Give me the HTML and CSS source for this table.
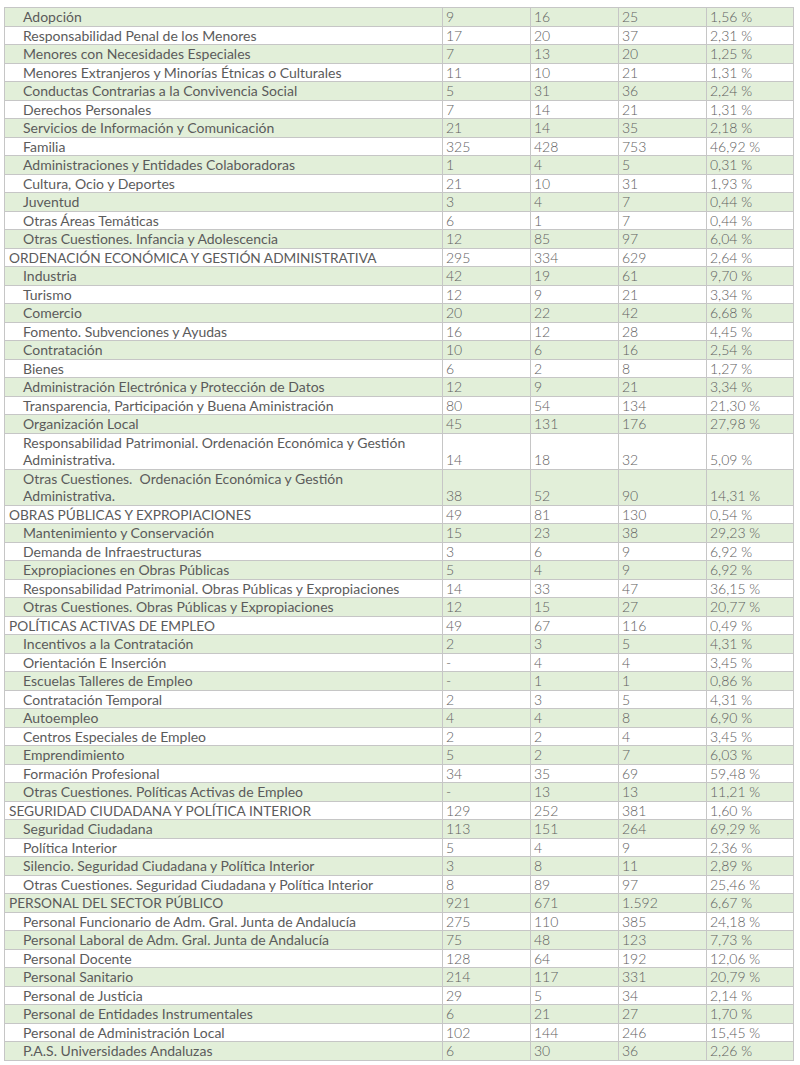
FILE: index.html
```html
<!DOCTYPE html>
<html lang="es">
<head>
<meta charset="utf-8">
<title>Tabla</title>
<link rel="stylesheet" href="styles.css">
</head>
<body>
<table class="data">
<colgroup><col class="c-label"><col class="c-num"><col class="c-num"><col class="c-num"><col class="c-pct"></colgroup>
<tbody>
<tr><td class="lbl">Adopción</td><td>9</td><td>16</td><td>25</td><td>1,56 %</td></tr>
<tr><td class="lbl">Responsabilidad Penal de los Menores</td><td>17</td><td>20</td><td>37</td><td>2,31 %</td></tr>
<tr><td class="lbl">Menores con Necesidades Especiales</td><td>7</td><td>13</td><td>20</td><td>1,25 %</td></tr>
<tr><td class="lbl">Menores Extranjeros y Minorías Étnicas o Culturales</td><td>11</td><td>10</td><td>21</td><td>1,31 %</td></tr>
<tr><td class="lbl">Conductas Contrarias a la Convivencia Social</td><td>5</td><td>31</td><td>36</td><td>2,24 %</td></tr>
<tr><td class="lbl">Derechos Personales</td><td>7</td><td>14</td><td>21</td><td>1,31 %</td></tr>
<tr><td class="lbl">Servicios de Información y Comunicación</td><td>21</td><td>14</td><td>35</td><td>2,18 %</td></tr>
<tr><td class="lbl">Familia</td><td>325</td><td>428</td><td>753</td><td>46,92 %</td></tr>
<tr><td class="lbl">Administraciones y Entidades Colaboradoras</td><td>1</td><td>4</td><td>5</td><td>0,31 %</td></tr>
<tr><td class="lbl">Cultura, Ocio y Deportes</td><td>21</td><td>10</td><td>31</td><td>1,93 %</td></tr>
<tr><td class="lbl">Juventud</td><td>3</td><td>4</td><td>7</td><td>0,44 %</td></tr>
<tr><td class="lbl">Otras Áreas Temáticas</td><td>6</td><td>1</td><td>7</td><td>0,44 %</td></tr>
<tr><td class="lbl">Otras Cuestiones. Infancia y Adolescencia</td><td>12</td><td>85</td><td>97</td><td>6,04 %</td></tr>
<tr><td class="cat">ORDENACIÓN ECONÓMICA Y GESTIÓN ADMINISTRATIVA</td><td>295</td><td>334</td><td>629</td><td>2,64 %</td></tr>
<tr><td class="lbl">Industria</td><td>42</td><td>19</td><td>61</td><td>9,70 %</td></tr>
<tr><td class="lbl">Turismo</td><td>12</td><td>9</td><td>21</td><td>3,34 %</td></tr>
<tr><td class="lbl">Comercio</td><td>20</td><td>22</td><td>42</td><td>6,68 %</td></tr>
<tr><td class="lbl">Fomento. Subvenciones y Ayudas</td><td>16</td><td>12</td><td>28</td><td>4,45 %</td></tr>
<tr><td class="lbl">Contratación</td><td>10</td><td>6</td><td>16</td><td>2,54 %</td></tr>
<tr><td class="lbl">Bienes</td><td>6</td><td>2</td><td>8</td><td>1,27 %</td></tr>
<tr><td class="lbl">Administración Electrónica y Protección de Datos</td><td>12</td><td>9</td><td>21</td><td>3,34 %</td></tr>
<tr><td class="lbl">Transparencia, Participación y Buena Aministración</td><td>80</td><td>54</td><td>134</td><td>21,30 %</td></tr>
<tr><td class="lbl">Organización Local</td><td>45</td><td>131</td><td>176</td><td>27,98 %</td></tr>
<tr><td class="lbl">Responsabilidad Patrimonial. Ordenación Económica y Gestión<br>Administrativa.</td><td>14</td><td>18</td><td>32</td><td>5,09 %</td></tr>
<tr><td class="lbl">Otras Cuestiones.&nbsp; Ordenación Económica y Gestión<br>Administrativa.</td><td>38</td><td>52</td><td>90</td><td>14,31 %</td></tr>
<tr><td class="cat">OBRAS PÚBLICAS Y EXPROPIACIONES</td><td>49</td><td>81</td><td>130</td><td>0,54 %</td></tr>
<tr><td class="lbl">Mantenimiento y Conservación</td><td>15</td><td>23</td><td>38</td><td>29,23 %</td></tr>
<tr><td class="lbl">Demanda de Infraestructuras</td><td>3</td><td>6</td><td>9</td><td>6,92 %</td></tr>
<tr><td class="lbl">Expropiaciones en Obras Públicas</td><td>5</td><td>4</td><td>9</td><td>6,92 %</td></tr>
<tr><td class="lbl">Responsabilidad Patrimonial. Obras Públicas y Expropiaciones</td><td>14</td><td>33</td><td>47</td><td>36,15 %</td></tr>
<tr><td class="lbl">Otras Cuestiones. Obras Públicas y Expropiaciones</td><td>12</td><td>15</td><td>27</td><td>20,77 %</td></tr>
<tr><td class="cat">POLÍTICAS ACTIVAS DE EMPLEO</td><td>49</td><td>67</td><td>116</td><td>0,49 %</td></tr>
<tr><td class="lbl">Incentivos a la Contratación</td><td>2</td><td>3</td><td>5</td><td>4,31 %</td></tr>
<tr><td class="lbl">Orientación E Inserción</td><td>-</td><td>4</td><td>4</td><td>3,45 %</td></tr>
<tr><td class="lbl">Escuelas Talleres de Empleo</td><td>-</td><td>1</td><td>1</td><td>0,86 %</td></tr>
<tr><td class="lbl">Contratación Temporal</td><td>2</td><td>3</td><td>5</td><td>4,31 %</td></tr>
<tr><td class="lbl">Autoempleo</td><td>4</td><td>4</td><td>8</td><td>6,90 %</td></tr>
<tr><td class="lbl">Centros Especiales de Empleo</td><td>2</td><td>2</td><td>4</td><td>3,45 %</td></tr>
<tr><td class="lbl">Emprendimiento</td><td>5</td><td>2</td><td>7</td><td>6,03 %</td></tr>
<tr><td class="lbl">Formación Profesional</td><td>34</td><td>35</td><td>69</td><td>59,48 %</td></tr>
<tr><td class="lbl">Otras Cuestiones. Políticas Activas de Empleo</td><td>-</td><td>13</td><td>13</td><td>11,21 %</td></tr>
<tr><td class="cat">SEGURIDAD CIUDADANA Y POLÍTICA INTERIOR</td><td>129</td><td>252</td><td>381</td><td>1,60 %</td></tr>
<tr><td class="lbl">Seguridad Ciudadana</td><td>113</td><td>151</td><td>264</td><td>69,29 %</td></tr>
<tr><td class="lbl">Política Interior</td><td>5</td><td>4</td><td>9</td><td>2,36 %</td></tr>
<tr><td class="lbl">Silencio. Seguridad Ciudadana y Política Interior</td><td>3</td><td>8</td><td>11</td><td>2,89 %</td></tr>
<tr><td class="lbl">Otras Cuestiones. Seguridad Ciudadana y Política Interior</td><td>8</td><td>89</td><td>97</td><td>25,46 %</td></tr>
<tr><td class="cat">PERSONAL DEL SECTOR PÚBLICO</td><td>921</td><td>671</td><td>1.592</td><td>6,67 %</td></tr>
<tr><td class="lbl">Personal Funcionario de Adm. Gral. Junta de Andalucía</td><td>275</td><td>110</td><td>385</td><td>24,18 %</td></tr>
<tr><td class="lbl">Personal Laboral de Adm. Gral. Junta de Andalucía</td><td>75</td><td>48</td><td>123</td><td>7,73 %</td></tr>
<tr><td class="lbl">Personal Docente</td><td>128</td><td>64</td><td>192</td><td>12,06 %</td></tr>
<tr><td class="lbl">Personal Sanitario</td><td>214</td><td>117</td><td>331</td><td>20,79 %</td></tr>
<tr><td class="lbl">Personal de Justicia</td><td>29</td><td>5</td><td>34</td><td>2,14 %</td></tr>
<tr><td class="lbl">Personal de Entidades Instrumentales</td><td>6</td><td>21</td><td>27</td><td>1,70 %</td></tr>
<tr><td class="lbl">Personal de Administración Local</td><td>102</td><td>144</td><td>246</td><td>15,45 %</td></tr>
<tr><td class="lbl">P.A.S. Universidades Andaluzas</td><td>6</td><td>30</td><td>36</td><td>2,26 %</td></tr>
</tbody>
</table>
</body>
</html>
```

FILE: styles.css
```css
html, body {
  margin: 0;
  padding: 0;
  background: #ffffff;
}
body {
  padding: 7px 0 0 4px;
}
.data {
  border-collapse: collapse;
  table-layout: fixed;
  width: 789px;
  font-family: Lato, "Open Sans", sans-serif;
  font-size: 14px;
  color: #5b5b5b;
}
.c-label { width: 438px; }
.c-num { width: 88px; }
.c-pct { width: 87px; }
.data td {
  border: 1px solid #c6c6c6;
  padding: 0 3px;
  line-height: 17.5px;
  vertical-align: bottom;
  white-space: nowrap;
  font-family: Lato, "Liberation Sans", sans-serif;
  font-weight: 300;
  font-size: 14px;
  color: #606060;
}
.data td.lbl {
  padding-left: 18px;
  font-weight: 400;
  font-size: 14px;
  color: #5b5b5b;
}
.data td.cat {
  padding-left: 4px;
  font-weight: 400;
  font-size: 13.7px;
  color: #5b5b5b;
}
.data tr:nth-child(odd) {
  background: #e2efd9;
}
```
